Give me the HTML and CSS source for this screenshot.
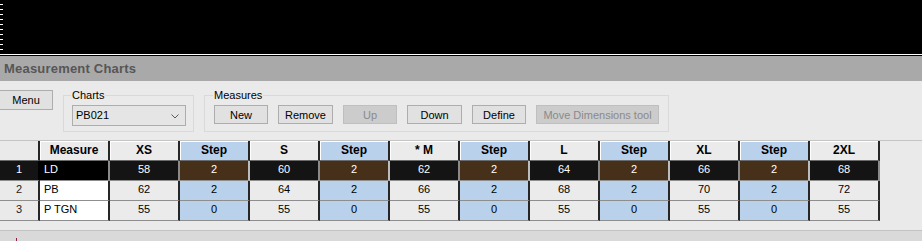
FILE: index.html
```html
<!DOCTYPE html>
<html lang="en">
  <head>
    <meta charset="UTF-8">
    <title>Measurement Charts</title>
    <link rel="stylesheet" href="styles.css">
  </head>
  <body>
    <div class="app">
      <div class="monitor"></div>
      <div class="title-bar">Measurement Charts</div>

      <div class="toolbar">
        <button class="btn menu-btn">Menu</button>

        <fieldset class="group charts-group">
          <legend>Charts</legend>
          <div class="combo">
            <span>PB021</span>
            <svg class="combo-arrow" width="8" height="5" viewBox="0 0 8 5">
              <path d="M0.5 0.5 L4 4 L7.5 0.5" fill="none" stroke="#5a5a5a" stroke-width="1"/>
            </svg>
          </div>
        </fieldset>

        <fieldset class="group measures-group">
          <legend>Measures</legend>
          <div class="btn-row">
            <button class="btn">New</button>
            <button class="btn">Remove</button>
            <button class="btn" disabled>Up</button>
            <button class="btn">Down</button>
            <button class="btn">Define</button>
            <button class="btn btn-wide" disabled>Move Dimensions tool</button>
          </div>
        </fieldset>
      </div>

      <div class="grid-area">
        <div class="grid">
          <!-- header -->
          <div class="cell head row-head"></div>
          <div class="cell head">Measure</div>
          <div class="cell head">XS</div>
          <div class="cell head step">Step</div>
          <div class="cell head">S</div>
          <div class="cell head step">Step</div>
          <div class="cell head">* M</div>
          <div class="cell head step">Step</div>
          <div class="cell head">L</div>
          <div class="cell head step">Step</div>
          <div class="cell head">XL</div>
          <div class="cell head step">Step</div>
          <div class="cell head">2XL</div>

          <!-- row 1 (selected) -->
          <div class="cell row-head sel">1</div>
          <div class="cell name sel">LD</div>
          <div class="cell sel">58</div>
          <div class="cell step sel">2</div>
          <div class="cell sel">60</div>
          <div class="cell step sel">2</div>
          <div class="cell sel">62</div>
          <div class="cell step sel">2</div>
          <div class="cell sel">64</div>
          <div class="cell step sel">2</div>
          <div class="cell sel">66</div>
          <div class="cell step sel">2</div>
          <div class="cell sel">68</div>

          <!-- row 2 -->
          <div class="cell row-head">2</div>
          <div class="cell name">PB</div>
          <div class="cell">62</div>
          <div class="cell step">2</div>
          <div class="cell">64</div>
          <div class="cell step">2</div>
          <div class="cell">66</div>
          <div class="cell step">2</div>
          <div class="cell">68</div>
          <div class="cell step">2</div>
          <div class="cell">70</div>
          <div class="cell step">2</div>
          <div class="cell">72</div>

          <!-- row 3 -->
          <div class="cell row-head">3</div>
          <div class="cell name">P TGN</div>
          <div class="cell">55</div>
          <div class="cell step">0</div>
          <div class="cell">55</div>
          <div class="cell step">0</div>
          <div class="cell">55</div>
          <div class="cell step">0</div>
          <div class="cell">55</div>
          <div class="cell step">0</div>
          <div class="cell">55</div>
          <div class="cell step">0</div>
          <div class="cell">55</div>
        </div>
      </div>

      <div class="status-bar"><span class="caret"></span></div>
    </div>
  </body>
</html>
```

FILE: styles.css
```css
* {
  margin: 0;
  padding: 0;
  box-sizing: border-box;
}
body {
  background: #eaeaea;
  overflow: hidden;
}
.app {
  width: 922px;
  height: 241px;
  display: flex;
  flex-direction: column;
  font-family: "Liberation Sans", Arial, sans-serif;
  font-size: 11px;
  color: #000;
  background: #eaeaea;
}

/* black strip above the window, ruler ticks on the left */
.monitor {
  height: 56px;
  background:
    linear-gradient(#000, #000) 0 55px / 100% 1px no-repeat,
    linear-gradient(#fff, #fff) 0 54px / 100% 1px no-repeat,
    repeating-linear-gradient(#000 0, #000 4px, #fff 4px, #fff 5px) 0 0 / 3px 53px no-repeat,
    #000;
}

.title-bar {
  height: 25px;
  line-height: 25px;
  padding-left: 4px;
  background: #a9a9a9;
  color: #565656;
  font-size: 13px;
  font-weight: bold;
  letter-spacing: 0.2px;
}

.toolbar {
  height: 59px;
  display: flex;
  align-items: flex-start;
}

.btn {
  height: 19px;
  width: 54px;
  border: 1px solid #adadad;
  background: #e1e1e1;
  font-family: inherit;
  font-size: 11px;
  color: #000;
  line-height: 16px;
}
.btn:disabled {
  background: #cccccc;
  border-color: #bfbfbf;
  color: #8a8a8a;
}
.menu-btn {
  margin-top: 9px;
  margin-left: -1px;
  width: 54px;
  height: 20px;
}

.group {
  margin-top: 7px;
  height: 44px;
  border: 1px solid #d9d9d9;
  padding-top: 3px;
}
.group legend {
  line-height: 14px;
  padding: 0 1px;
  margin-left: -1px;
}
.charts-group {
  margin-left: 10px;
  width: 131px;
  padding-left: 8px;
  padding-right: 7px;
}
.measures-group {
  margin-left: 10px;
  width: 465px;
  padding-left: 9px;
  padding-right: 9px;
}

.combo {
  height: 21px;
  border: 1px solid #adadad;
  background: #e5e5e5;
  display: flex;
  align-items: center;
  justify-content: space-between;
  padding: 0 6px 0 3px;
  line-height: 19px;
}
.combo-arrow {
  margin-top: 1px;
}

.btn-row {
  display: flex;
  gap: 10px;
}
.btn-row .btn:nth-child(2),
.btn-row .btn:nth-child(4) {
  width: 55px;
}
.btn-wide {
  width: 123px;
}

/* grid */
.grid-area {
  height: 90px;
  border-top: 1px solid #c4c4c4;
}
.grid {
  display: grid;
  grid-template-columns: 40px repeat(12, 70px);
  grid-auto-rows: 20px;
  width: 880px;
}
.cell {
  background: #ebebeb;
  border-right: 2px solid #262626;
  border-bottom: 1px solid #8e8e8e;
  text-align: center;
  line-height: 17px;
  white-space: nowrap;
  overflow: hidden;
}
.cell.head {
  font-size: 12px;
  font-weight: bold;
  line-height: 18px;
  box-shadow: inset 1px 1px 0 #fff;
  border-bottom-color: #6b6b6b;
}
.cell.step {
  background: #b9d1ea;
}
.cell.name {
  background: #fff;
  text-align: left;
  padding-left: 4px;
}
.cell.row-head {
  background: #eaeaea;
  color: #222;
}
.cell.head.row-head {
  box-shadow: none;
}
.cell.sel {
  background: #141414;
  color: #fff;
  border-right-color: #8a8a8a;
}
.cell.name.sel {
  background: #000;
}
.cell.row-head.sel {
  border-right-color: #000;
}
.cell.step.sel {
  background: #47301a;
  border-right-color: #bdbdbd;
}

.status-bar {
  flex: 1;
  border-top: 1px solid #c2c2c2;
  background: #d9d9d9;
  position: relative;
}
.caret {
  position: absolute;
  left: 16px;
  top: 7px;
  width: 1px;
  height: 3px;
  background: #8b1a4a;
}
```
